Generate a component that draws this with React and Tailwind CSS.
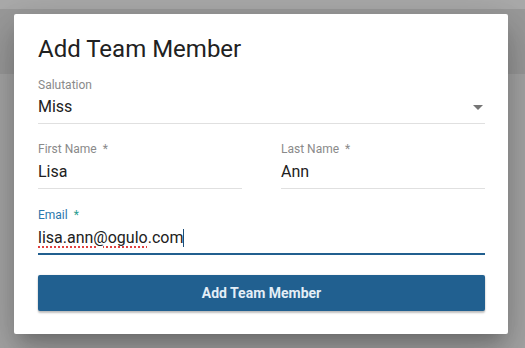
export default function App() {
  return (
    <div className="relative w-[525px] h-[348px] overflow-hidden flex flex-col bg-[#a8a8a8]" style={{ fontFamily: "Roboto, 'Noto Sans', sans-serif" }}>
      <div className="h-[9px] bg-[#ababab]" />
      <div className="h-[65px] bg-[#9b9b9b]" />
      <div className="flex-1 bg-[#a7a7a7]" />

      <div className="absolute left-[14px] top-[14px] w-[494px] h-[320px] bg-white rounded-[2px] shadow-[0_11px_15px_-7px_rgba(0,0,0,0.2),0_24px_38px_3px_rgba(0,0,0,0.14),0_9px_46px_8px_rgba(0,0,0,0.12)] pl-[24px] pr-[23px] pt-[19px] flex flex-col">
        <h2 className="text-[24px] leading-[32px] text-[#212121] font-normal">Add Team Member</h2>

        {/* Salutation */}
        <div className="mt-[12px] text-[12px] leading-[16px] text-[#8a8a8a]">Salutation</div>
        <div className="mt-[2px] h-[29px] border-b border-[#e0e0e0] flex items-start justify-between">
          <span className="text-[16px] leading-[24px] text-[#212121]">Miss</span>
          <svg width="10" height="5" viewBox="0 0 10 5" className="mt-[10px] mr-[2px]">
            <path d="M0 0 L10 0 L5 5 Z" fill="#757575" />
          </svg>
        </div>

        {/* Names */}
        <div className="mt-[17px] grid grid-cols-[204px_204px] gap-x-[39px]">
          <div className="flex flex-col">
            <div className="text-[12px] leading-[16px] text-[#8a8a8a]">First Name&nbsp; *</div>
            <div className="mt-[3px] h-[29px] border-b border-[#e0e0e0]">
              <span className="text-[16px] leading-[24px] text-[#212121]">Lisa</span>
            </div>
          </div>
          <div className="flex flex-col">
            <div className="text-[12px] leading-[16px] text-[#8a8a8a]">Last Name&nbsp; *</div>
            <div className="mt-[3px] h-[29px] border-b border-[#e0e0e0]">
              <span className="text-[16px] leading-[24px] text-[#212121]">Ann</span>
            </div>
          </div>
        </div>

        {/* Email */}
        <div className="mt-[18px] text-[12px] leading-[16px] text-[#2a78ad]">
          Email&nbsp; <span className="text-[#2a9d8f]">*</span>
        </div>
        <div className="mt-[3px] h-[29px] border-b-2 border-[#215f8f] flex items-start">
          <span className="text-[16px] leading-[24px] text-[#212121]">
            <span className="underline decoration-dotted decoration-[#e0403f] decoration-2 underline-offset-[3px]">lisa.ann@ogulo</span>.com
          </span>
          <span className="inline-block w-px h-[18px] mt-[3px] bg-[#1d4f78]" />
        </div>

        <button className="mt-[20px] h-[36px] w-full rounded-[2px] bg-[#216090] text-[#e3eef7] text-[14px] font-bold shadow-[0_2px_2px_rgba(0,0,0,0.24),0_0_2px_rgba(0,0,0,0.12)]">
          Add Team Member
        </button>
      </div>
    </div>
  );
}
